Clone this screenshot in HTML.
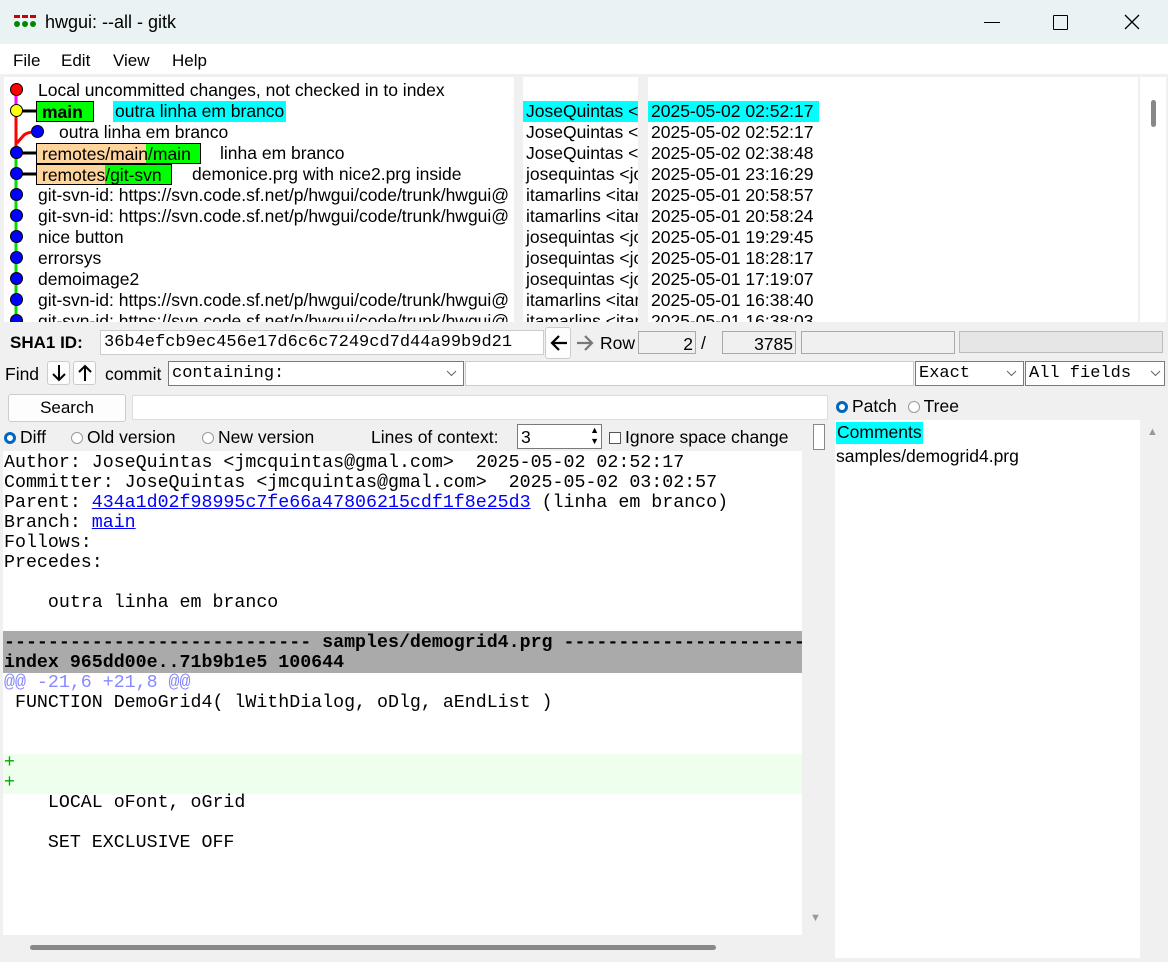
<!DOCTYPE html>
<html><head><meta charset="utf-8"><style>
*{box-sizing:border-box;margin:0;padding:0}
body{width:1168px;height:962px;background:#f0f0f0;font-family:"Liberation Sans",sans-serif;font-size:17.5px;color:#000;position:relative;overflow:hidden}
.a{position:absolute;white-space:pre}
.m{font-family:"Liberation Mono",monospace}
.w{background:#fff}
.dot{position:absolute;width:13px;height:13px;border-radius:50%;border:1px solid #000;background:#00f}
.box{position:absolute;border:1px solid #7a7a7a;background:#fff}
.btn{position:absolute;border:1px solid #ccc;border-radius:3px;background:#fdfdfd}
.rad{display:inline-block;width:12px;height:12px;border-radius:50%;border:1px solid #999;vertical-align:-1px;margin-right:4px;background:#fff}
.radon{border:3.5px solid #0067c0}
.chev{position:absolute;right:6px;top:8px}
</style></head><body>
<div class="a" style="left:0;top:0;width:1168px;height:44px;background:#eaf3f4"></div>
<svg class="a" style="left:14px;top:15px" width="22" height="14"><rect x="0" y="0" width="6" height="3" fill="#c00"/><rect x="8" y="0" width="6" height="3" fill="#c00"/><rect x="16" y="0" width="6" height="3" fill="#c00"/><circle cx="3" cy="9" r="3" fill="#080"/><circle cx="11" cy="9" r="3" fill="#080"/><circle cx="19" cy="9" r="3" fill="#080"/></svg>
<div class="a" style="left:45px;top:12px;font-size:18px">hwgui: --all - gitk</div>
<div class="a" style="left:984px;top:22px;width:16px;height:1px;background:#000"></div>
<div class="a" style="left:1053px;top:15px;width:15px;height:15px;border:1.5px solid #000;border-radius:1px"></div>
<svg class="a" style="left:1124px;top:14px" width="16" height="16"><path d="M1 1L15 15M15 1L1 15" stroke="#000" stroke-width="1.3"/></svg>
<div class="a" style="left:0;top:44px;width:1168px;height:30px;background:#fff"></div>
<div class="a" style="left:13px;top:51px;font-size:17px">File</div>
<div class="a" style="left:61px;top:51px;font-size:17px">Edit</div>
<div class="a" style="left:113px;top:51px;font-size:17px">View</div>
<div class="a" style="left:172px;top:51px;font-size:17px">Help</div>
<div class="a w" style="left:4px;top:77px;width:510px;height:245px;overflow:hidden">
<svg class="a" style="left:0;top:0" width="60" height="245">
<line x1="12" y1="13" x2="12" y2="34" stroke="#f0f" stroke-width="3"/>
<line x1="12" y1="34" x2="12" y2="245" stroke="#0d0" stroke-width="3"/>
<line x1="12" y1="34" x2="12" y2="76" stroke="#f00" stroke-width="3"/>
<path d="M13 66 L20 58 Q24 55 30 55" stroke="#f00" stroke-width="3" fill="none"/>
<line x1="12" y1="34" x2="34" y2="34" stroke="#000" stroke-width="3"/>
<line x1="12" y1="76" x2="34" y2="76" stroke="#000" stroke-width="3"/>
<line x1="12" y1="97" x2="34" y2="97" stroke="#000" stroke-width="3"/>
</svg>
<div class="dot" style="left:6px;top:6px;background:#f00"></div>
<div class="dot" style="left:6px;top:27px;background:#ff0"></div>
<div class="dot" style="left:27px;top:48px"></div>
<div class="dot" style="left:6px;top:69px"></div>
<div class="dot" style="left:6px;top:90px"></div>
<div class="dot" style="left:6px;top:111px"></div>
<div class="dot" style="left:6px;top:132px"></div>
<div class="dot" style="left:6px;top:153px"></div>
<div class="dot" style="left:6px;top:174px"></div>
<div class="dot" style="left:6px;top:195px"></div>
<div class="dot" style="left:6px;top:216px"></div>
<div class="dot" style="left:6px;top:237px"></div>
<div class="a" style="left:34px;top:3px">Local uncommitted changes, not checked in to index</div>
<div class="a" style="left:32px;top:24px;width:58px;height:21px;background:#0f0;border:1px solid #000;font-weight:bold;padding-left:5px;line-height:20px">main</div>
<div class="a" style="left:109px;top:24px;background:#0ff;padding:0 2px;height:21px;line-height:21px">outra linha em branco</div>
<div class="a" style="left:55px;top:45px">outra linha em branco</div>
<div class="a" style="left:32px;top:66px;width:165px;height:21px;border:1px solid #000;background:linear-gradient(90deg,#ffd59c 0 109px,#0f0 109px);padding-left:5px;line-height:20px">remotes/main/main</div>
<div class="a" style="left:216px;top:66px">linha em branco</div>
<div class="a" style="left:32px;top:87px;width:136px;height:21px;border:1px solid #000;background:linear-gradient(90deg,#ffd59c 0 68px,#0f0 68px);padding-left:5px;line-height:20px">remotes/git-svn</div>
<div class="a" style="left:188px;top:87px">demonice.prg with nice2.prg inside</div>
<div class="a" style="left:34px;top:108px">git-svn-id: https://svn.code.sf.net/p/hwgui/code/trunk/hwgui@</div>
<div class="a" style="left:34px;top:129px">git-svn-id: https://svn.code.sf.net/p/hwgui/code/trunk/hwgui@</div>
<div class="a" style="left:34px;top:150px">nice button</div>
<div class="a" style="left:34px;top:171px">errorsys</div>
<div class="a" style="left:34px;top:192px">demoimage2</div>
<div class="a" style="left:34px;top:213px">git-svn-id: https://svn.code.sf.net/p/hwgui/code/trunk/hwgui@</div>
<div class="a" style="left:34px;top:234px">git-svn-id: https://svn.code.sf.net/p/hwgui/code/trunk/hwgui@</div>
</div>
<div class="a w" style="left:523px;top:77px;width:115px;height:245px;overflow:hidden">
<div class="a" style="left:0;top:24px;width:115px;height:21px;background:#0ff"></div>
<div class="a" style="left:3px;top:24px">JoseQuintas &lt;</div>
<div class="a" style="left:3px;top:45px">JoseQuintas &lt;</div>
<div class="a" style="left:3px;top:66px">JoseQuintas &lt;</div>
<div class="a" style="left:3px;top:87px">josequintas &lt;jo</div>
<div class="a" style="left:3px;top:108px">itamarlins &lt;itan</div>
<div class="a" style="left:3px;top:129px">itamarlins &lt;itan</div>
<div class="a" style="left:3px;top:150px">josequintas &lt;jo</div>
<div class="a" style="left:3px;top:171px">josequintas &lt;jo</div>
<div class="a" style="left:3px;top:192px">josequintas &lt;jo</div>
<div class="a" style="left:3px;top:213px">itamarlins &lt;itan</div>
<div class="a" style="left:3px;top:234px">itamarlins &lt;itan</div>
</div>
<div class="a w" style="left:648px;top:77px;width:490px;height:245px;overflow:hidden">
<div class="a" style="left:0;top:24px;width:171px;height:21px;background:#0ff"></div>
<div class="a" style="left:3px;top:24px">2025-05-02 02:52:17</div>
<div class="a" style="left:3px;top:45px">2025-05-02 02:52:17</div>
<div class="a" style="left:3px;top:66px">2025-05-02 02:38:48</div>
<div class="a" style="left:3px;top:87px">2025-05-01 23:16:29</div>
<div class="a" style="left:3px;top:108px">2025-05-01 20:58:57</div>
<div class="a" style="left:3px;top:129px">2025-05-01 20:58:24</div>
<div class="a" style="left:3px;top:150px">2025-05-01 19:29:45</div>
<div class="a" style="left:3px;top:171px">2025-05-01 18:28:17</div>
<div class="a" style="left:3px;top:192px">2025-05-01 17:19:07</div>
<div class="a" style="left:3px;top:213px">2025-05-01 16:38:40</div>
<div class="a" style="left:3px;top:234px">2025-05-01 16:38:03</div>
</div>
<div class="a w" style="left:1140px;top:77px;width:26px;height:245px"></div>
<div class="a" style="left:1151px;top:100px;width:5px;height:27px;background:#888;border-radius:3px"></div>
<div class="a" style="left:10px;top:333px;font-weight:bold;font-size:17px">SHA1 ID:</div>
<div class="box m" style="left:100px;top:330px;width:444px;height:25px;border-color:#ccc;padding:2px 0 0 3px;font-size:17px">36b4efcb9ec456e17d6c6c7249cd7d44a99b9d21</div>
<div class="btn" style="left:545px;top:327px;width:26px;height:32px"></div>
<svg class="a" style="left:549px;top:333px" width="20" height="20"><path d="M18 10H3M10 3L3 10L10 17" stroke="#000" stroke-width="2.2" fill="none"/></svg>
<svg class="a" style="left:575px;top:333px" width="20" height="20"><path d="M2 10H17M10 3L17 10L10 17" stroke="#777" stroke-width="2.2" fill="none"/></svg>
<div class="a" style="left:600px;top:333px;font-size:17.5px">Row</div>
<div class="a" style="left:638px;top:331px;width:58px;height:23px;border:1px solid #aaa;text-align:right;padding:2px 2px 0 0">2</div>
<div class="a" style="left:701px;top:333px">/</div>
<div class="a" style="left:722px;top:331px;width:74px;height:23px;border:1px solid #aaa;text-align:right;padding:2px 2px 0 0">3785</div>
<div class="a" style="left:801px;top:331px;width:154px;height:23px;border:1px solid #aaa"></div>
<div class="a" style="left:959px;top:331px;width:204px;height:22px;border:1px solid #bbb;background:#e6e6e6"></div>
<div class="a" style="left:5px;top:364px;font-size:17.5px">Find</div>
<div class="btn" style="left:47px;top:361px;width:23px;height:24px"></div>
<svg class="a" style="left:50px;top:364px" width="18" height="18"><path d="M9 1V16M3 10L9 16L15 10" stroke="#000" stroke-width="2" fill="none"/></svg>
<div class="btn" style="left:73px;top:361px;width:23px;height:24px"></div>
<svg class="a" style="left:76px;top:364px" width="18" height="18"><path d="M9 17V2M3 8L9 2L15 8" stroke="#000" stroke-width="2" fill="none"/></svg>
<div class="a" style="left:105px;top:364px;font-size:17.5px">commit</div>
<div class="box m" style="left:168px;top:361px;width:296px;height:25px;padding:2px 3px;font-size:17px">containing:<svg class="chev" width="11" height="7"><path d="M1 1L5.5 5.5L10 1" stroke="#666" fill="none"/></svg></div>
<div class="box" style="left:465px;top:361px;width:449px;height:25px;border-color:#ccc"></div>
<div class="box m" style="left:915px;top:361px;width:109px;height:25px;padding:2px 3px;font-size:17px">Exact<svg class="chev" width="11" height="7"><path d="M1 1L5.5 5.5L10 1" stroke="#666" fill="none"/></svg></div>
<div class="box m" style="left:1025px;top:361px;width:140px;height:25px;padding:2px 3px;font-size:17px">All fields<svg class="chev" style="right:3px" width="11" height="7"><path d="M1 1L5.5 5.5L10 1" stroke="#666" fill="none"/></svg></div>
<div class="btn" style="left:8px;top:394px;width:118px;height:28px;text-align:center;line-height:26px;font-size:17px">Search</div>
<div class="box" style="left:132px;top:395px;width:696px;height:25px;border-color:#ddd"></div>
<div class="a" style="left:836px;top:396px;font-size:17.5px"><span class="rad radon"></span>Patch <span style="display:inline-block;width:6px"></span><span class="rad"></span>Tree</div>
<div class="a" style="left:4px;top:427px;font-size:17.5px"><span class="rad radon"></span>Diff</div>
<div class="a" style="left:71px;top:427px;font-size:17.5px"><span class="rad"></span>Old version</div>
<div class="a" style="left:202px;top:427px;font-size:17.5px"><span class="rad"></span>New version</div>
<div class="a" style="left:371px;top:427px;font-size:17.5px">Lines of context:</div>
<div class="box" style="left:517px;top:424px;width:85px;height:25px;padding:2px 3px">3<span style="position:absolute;right:2px;top:0;font-size:9px;line-height:11px">▲<br>▼</span></div>
<div class="a" style="left:609px;top:427px;font-size:17.5px"><span style="display:inline-block;width:12px;height:12px;border:1px solid #555;vertical-align:-1px;margin-right:4px;background:#fff"></span>Ignore space change</div>
<div class="box" style="left:813px;top:424px;width:12px;height:26px;border-color:#888"></div>
<div class="a w m" style="left:3px;top:451px;width:799px;height:484px;font-size:18.3px;line-height:20px;overflow:hidden">
<div class="a" style="left:1px;top:2px">Author: JoseQuintas &lt;jmcquintas@gmal.com&gt;  2025-05-02 02:52:17
Committer: JoseQuintas &lt;jmcquintas@gmal.com&gt;  2025-05-02 03:02:57
Parent: <span style="color:#00f;text-decoration:underline">434a1d02f98995c7fe66a47806215cdf1f8e25d3</span> (linha em branco)
Branch: <span style="color:#00f;text-decoration:underline">main</span>
Follows:
Precedes:

    outra linha em branco
</div>
<div class="a" style="left:0;top:180px;width:799px;height:42px;background:#aaa"></div>
<div class="a" style="left:1px;top:182px;font-weight:bold">---------------------------- samples/demogrid4.prg ----------------------------
index 965dd00e..71b9b1e5 100644</div>
<div class="a" style="left:1px;top:222px;color:#88f">@@ -21,6 +21,8 @@</div>
<div class="a" style="left:1px;top:242px"> FUNCTION DemoGrid4( lWithDialog, oDlg, aEndList )</div>
<div class="a" style="left:0;top:303px;width:799px;height:40px;background:#efe"></div>
<div class="a" style="left:1px;top:302px;color:#0a0">+
+</div>
<div class="a" style="left:1px;top:342px">    LOCAL oFont, oGrid

    SET EXCLUSIVE OFF</div>
</div>
<div class="a" style="left:808px;top:451px;width:22px;height:484px;background:#f0f0f0"></div>
<div class="a" style="left:810px;top:912px;color:#999;font-size:11px">▼</div>
<div class="a" style="left:3px;top:937px;width:827px;height:20px;background:#f0f0f0"></div>
<div class="a" style="left:30px;top:945px;width:686px;height:5px;background:#888;border-radius:3px"></div>
<div class="a w" style="left:835px;top:420px;width:305px;height:538px"></div>
<div class="a" style="left:836px;top:422px;background:#0ff;padding:0 1px;font-size:17.5px;height:22px">Comments</div>
<div class="a" style="left:836px;top:446px">samples/demogrid4.prg</div>
<div class="a" style="left:1142px;top:420px;width:24px;height:538px;background:#f0f0f0"></div>
<div class="a" style="left:1147px;top:426px;color:#999;font-size:11px">▲</div>
</body></html>
